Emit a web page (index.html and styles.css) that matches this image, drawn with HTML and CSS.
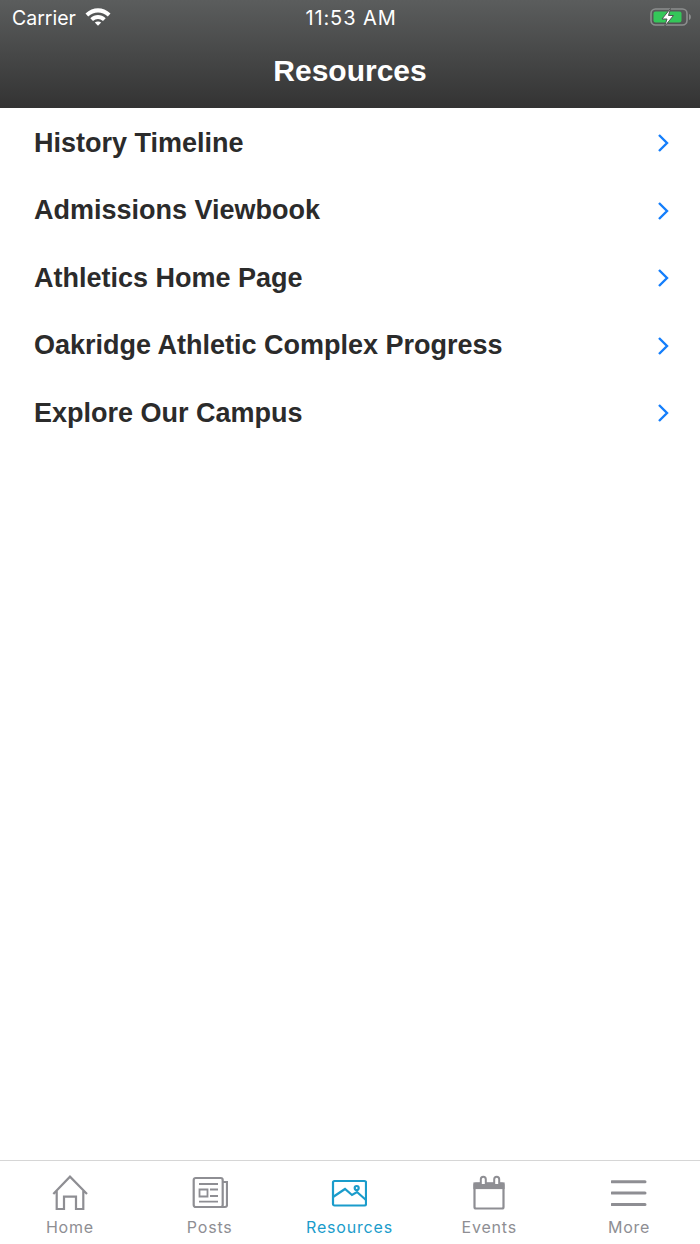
FILE: index.html
```html
<!DOCTYPE html>
<html>
<head>
    <title>Resources</title>
    <link rel="stylesheet" href="styles.css">
</head>
<body>
    <div id="app">
        <header class="top-bar">
            <div class="status-bar">
                <div class="status-left">
                    <span>Carrier</span>
                    <svg class="wifi" width="26" height="19" viewBox="0 0 26 19">
                        <path d="M0.500 6.500C8 -0.500 18 -0.500 25.500 6.500L22.800 9.400C17 4.200 9 4.200 3.200 9.400Z" fill="#fff"/>
                        <path d="M5.300 11.200C10 7 16 7 20.700 11.200L18 14C15 11.300 11 11.300 8 14Z" fill="#fff"/>
                        <path d="M9.800 15.500C11.600 14 14.400 14 16.200 15.500L13 18.800Z" fill="#fff"/>
                    </svg>
                </div>
                <span class="clock">11:53 AM</span>
                <svg class="battery" width="42" height="20" viewBox="0 0 42 20">
                    <rect x="1" y="1" width="36" height="16" rx="4.500" fill="none" stroke="#8c8e8e" stroke-width="1.600"/>
                    <rect x="3.500" y="3.500" width="28" height="11" rx="2" fill="#34c759"/>
                    <path d="M39 6C41.500 6.500 41.500 11.500 39 12Z" fill="#8c8e8e"/>
                    <path d="M20.500 0.500L12 11H17L14.500 18.500L23.500 7.500H18.500Z" fill="#fff" stroke="#515353" stroke-width="1"/>
                </svg>
            </div>
            <h1 class="page-title">Resources</h1>
        </header>

        <ul class="resource-list">
            <li class="resource-row"><span>History Timeline</span><svg class="chevron" width="12" height="20" viewBox="0 0 12 20"><path d="M2 2L10 10L2 18" /></svg></li>
            <li class="resource-row"><span>Admissions Viewbook</span><svg class="chevron" width="12" height="20" viewBox="0 0 12 20"><path d="M2 2L10 10L2 18" /></svg></li>
            <li class="resource-row"><span>Athletics Home Page</span><svg class="chevron" width="12" height="20" viewBox="0 0 12 20"><path d="M2 2L10 10L2 18" /></svg></li>
            <li class="resource-row"><span>Oakridge Athletic Complex Progress</span><svg class="chevron" width="12" height="20" viewBox="0 0 12 20"><path d="M2 2L10 10L2 18" /></svg></li>
            <li class="resource-row"><span>Explore Our Campus</span><svg class="chevron" width="12" height="20" viewBox="0 0 12 20"><path d="M2 2L10 10L2 18" /></svg></li>
        </ul>

        <nav class="tab-bar">
            <div class="tab">
                <svg class="tab-icon" width="36" height="36" viewBox="0 0 36 36">
                    <path d="M1.300 19L18 1.700L35 19M4.700 16V34H12V21.700H24V34H31.300V16"/>
                </svg>
                <span>Home</span>
            </div>
            <div class="tab">
                <svg class="tab-icon" width="36" height="36" viewBox="0 0 36 36">
                    <path d="M30.700 5V30A2 2 0 0 1 28.700 32H3.700A2 2 0 0 1 1.700 30V5A2 2 0 0 1 3.700 3H28.700A2 2 0 0 1 30.700 5ZM30.700 7H35V30A2 2 0 0 1 33 32H28.700"/>
                    <path class="thin" d="M7 9H26M7.500 14.500H15.500V21.500H7.500ZM18 14.500H26M18 21H26M7 26.700H26"/>
                </svg>
                <span>Posts</span>
            </div>
            <div class="tab active">
                <svg class="tab-icon" width="36" height="36" viewBox="0 0 36 36">
                    <rect x="2" y="6" width="33" height="24.500" rx="1.500"/>
                    <path d="M2 22L14 14L21 20L26 17L35 25"/>
                    <circle cx="25.700" cy="13" r="2"/>
                </svg>
                <span>Resources</span>
            </div>
            <div class="tab">
                <svg class="tab-icon" width="36" height="36" viewBox="0 0 36 36">
                    <rect x="3.500" y="8.500" width="29" height="25" rx="1.500"/>
                    <rect class="band" x="3.500" y="8.500" width="29" height="4.500"/>
                    <path class="ring" d="M9.800 10V4.200A2.500 2.500 0 0 1 14.800 4.200V10ZM23.200 10V4.200A2.500 2.500 0 0 1 28.200 4.200V10Z"/>
                </svg>
                <span>Events</span>
            </div>
            <div class="tab">
                <svg class="tab-icon menu" width="36" height="36" viewBox="0 0 36 36">
                    <path d="M1 6.700H34M1 18H34M1 29.500H34"/>
                </svg>
                <span>More</span>
            </div>
        </nav>
    </div>
</body>
</html>
```

FILE: styles.css
```css
* {
    box-sizing: border-box;
}

body {
    margin: 0;
    background-color: #fff;
    font-family: "Liberation Sans", Arial, sans-serif;
}

#app {
    display: flex;
    flex-direction: column;
    height: 1244px;
    overflow: hidden;
}

.top-bar {
    height: 108px;
    flex-shrink: 0;
    background: linear-gradient(to bottom, #5b5d5d, #333333);
    color: #fff;
}

.status-bar {
    display: grid;
    grid-template-columns: 1fr auto 1fr;
    align-items: center;
    height: 36px;
    padding: 0 8px 0 12px;
    font-family: Inter, sans-serif;
    font-size: 19.5px;
}

.status-left {
    display: flex;
    align-items: center;
    gap: 9px;
}

.wifi {
    margin-top: -3px;
}

.clock {
    padding-right: 2px;
    font-size: 20px;
    letter-spacing: 0.9px;
}

.battery {
    justify-self: end;
}

.page-title {
    margin: 0;
    text-align: center;
    font-size: 30px;
    line-height: 70px;
    font-weight: bold;
}

.resource-list {
    flex: 1;
    list-style: none;
    margin: 0;
    padding: 1.300px 0 0;
}

.resource-row {
    display: flex;
    align-items: center;
    justify-content: space-between;
    height: 67.5px;
    padding: 0 31px 0 34px;
    font-size: 27px;
    font-weight: bold;
    color: #2b2b2b;
}

.chevron path {
    fill: none;
    stroke: #147efb;
    stroke-width: 2.400;
}

.tab-bar {
    display: flex;
    height: 84px;
    flex-shrink: 0;
    padding-right: 1px;
    border-top: 1px solid #d6d6d6;
}

.tab {
    flex: 1;
    display: flex;
    flex-direction: column;
    align-items: center;
    padding-top: 14px;
    gap: 6px;
    font-family: Inter, sans-serif;
    font-size: 16px;
    letter-spacing: 0.8px;
    color: #8e8e93;
}

.tab-icon {
    fill: none;
    stroke: #8e8e93;
    stroke-width: 2.200;
}

.tab-icon .thin {
    stroke-width: 1.800;
}

.tab-icon .band {
    fill: #8e8e93;
}

.tab-icon .ring {
    fill: #fff;
    stroke-width: 2;
}

.tab-icon.menu {
    stroke-width: 3;
    stroke-linecap: round;
}

.tab.active {
    color: #1a9ccb;
}

.tab.active .tab-icon {
    stroke: #1a9ccb;
}
```
